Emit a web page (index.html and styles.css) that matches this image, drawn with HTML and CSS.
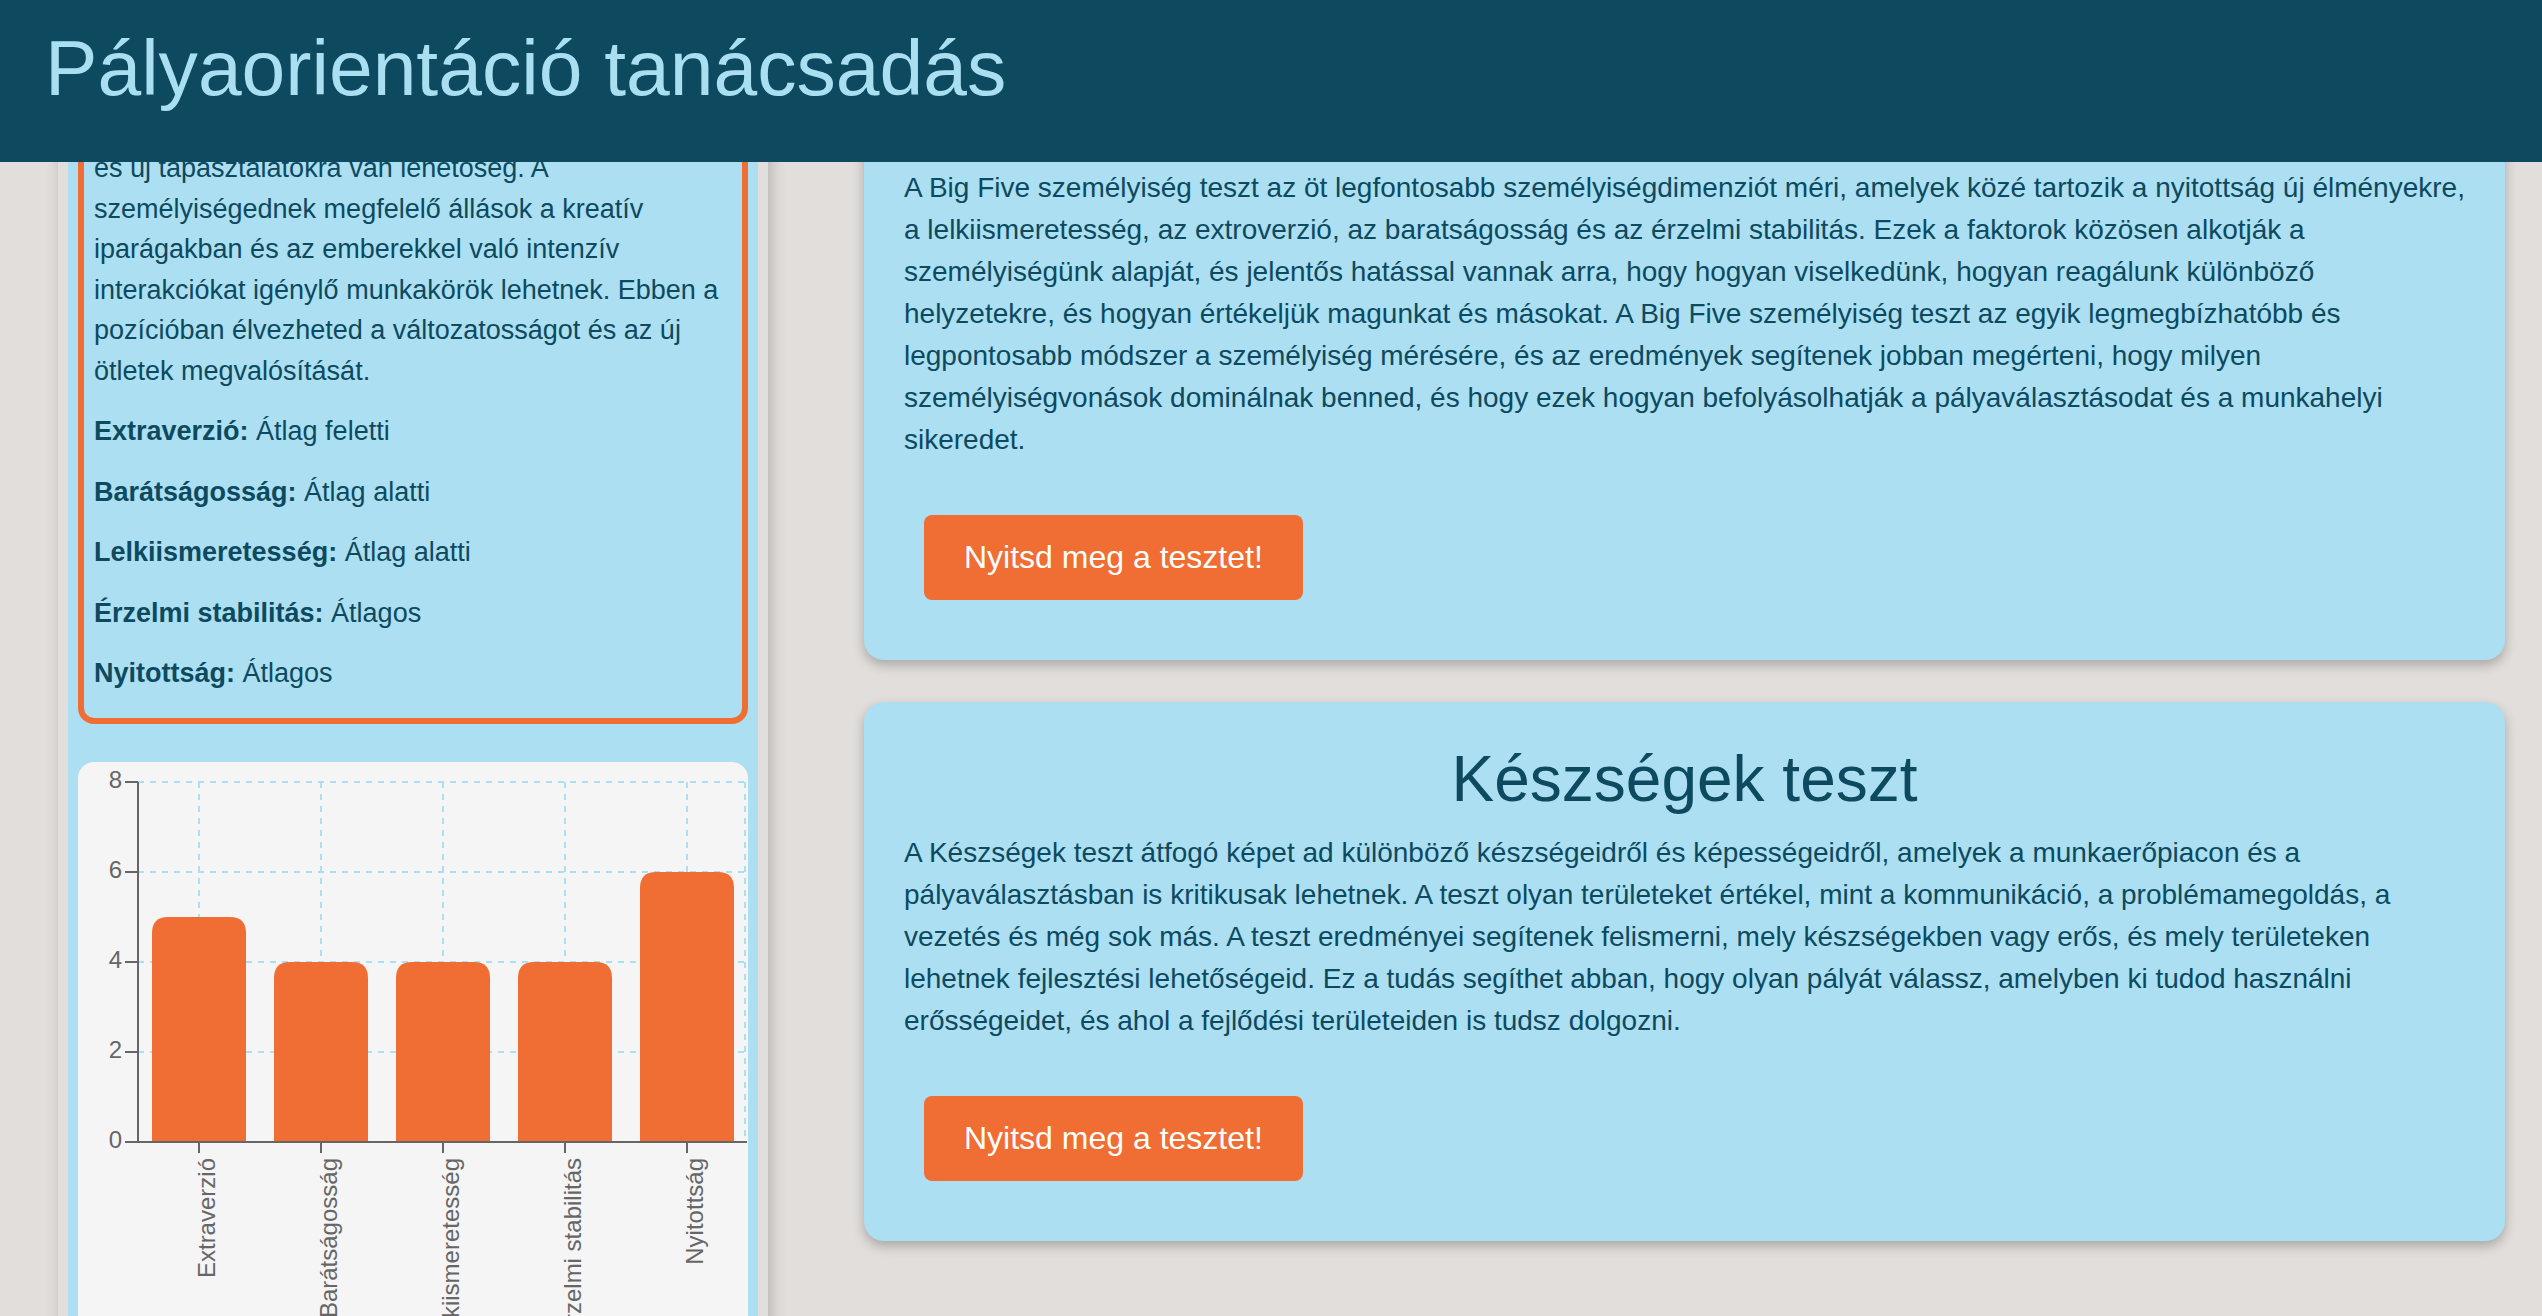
FILE: index.html
```html
<!DOCTYPE html>
<html lang="hu">
<head>
<meta charset="utf-8">
<title>Pályaorientáció tanácsadás</title>
<link rel="stylesheet" href="styles.css">
</head>
<body>
<header class="topbar">
  <h1 class="topbar-title">Pályaorientáció tanácsadás</h1>
</header>

<div class="layout">
  <aside class="sidebar">
    <div class="sidebar-panel">
      <div class="result-box">
        <p class="result-text">és új tapasztalatokra van lehetőség. A személyiségednek megfelelő állások a kreatív iparágakban és az emberekkel való intenzív interakciókat igénylő munkakörök lehetnek. Ebben a pozícióban élvezheted a változatosságot és az új ötletek megvalósítását.</p>
        <p class="result-text"><strong>Extraverzió:</strong> Átlag feletti</p>
        <p class="result-text"><strong>Barátságosság:</strong> Átlag alatti</p>
        <p class="result-text"><strong>Lelkiismeretesség:</strong> Átlag alatti</p>
        <p class="result-text"><strong>Érzelmi stabilitás:</strong> Átlagos</p>
        <p class="result-text"><strong>Nyitottság:</strong> Átlagos</p>
      </div>
      <div class="chart-card">
        <svg class="chart" width="669" height="640" viewBox="0 0 669 640">
          <g class="grid">
            <line x1="60" y1="20" x2="669" y2="20"/>
            <line x1="60" y1="110" x2="669" y2="110"/>
            <line x1="60" y1="200" x2="669" y2="200"/>
            <line x1="60" y1="290" x2="669" y2="290"/>
            <line x1="121" y1="20" x2="121" y2="380"/>
            <line x1="243" y1="20" x2="243" y2="380"/>
            <line x1="365" y1="20" x2="365" y2="380"/>
            <line x1="487" y1="20" x2="487" y2="380"/>
            <line x1="609" y1="20" x2="609" y2="380"/>
            <line x1="667" y1="20" x2="667" y2="380"/>
          </g>
          <g class="bars">
            <path d="M74 380 V171 Q74 155 90 155 H152 Q168 155 168 171 V380 Z"/>
            <path d="M196 380 V216 Q196 200 212 200 H274 Q290 200 290 216 V380 Z"/>
            <path d="M318 380 V216 Q318 200 334 200 H396 Q412 200 412 216 V380 Z"/>
            <path d="M440 380 V216 Q440 200 456 200 H518 Q534 200 534 216 V380 Z"/>
            <path d="M562 380 V126 Q562 110 578 110 H640 Q656 110 656 126 V380 Z"/>
          </g>
          <g class="axis">
            <line x1="60" y1="20" x2="60" y2="381"/>
            <line x1="47" y1="380" x2="669" y2="380"/>
            <line x1="47" y1="20" x2="60" y2="20"/>
            <line x1="47" y1="110" x2="60" y2="110"/>
            <line x1="47" y1="200" x2="60" y2="200"/>
            <line x1="47" y1="290" x2="60" y2="290"/>
            <line x1="121" y1="380" x2="121" y2="391"/>
            <line x1="243" y1="380" x2="243" y2="391"/>
            <line x1="365" y1="380" x2="365" y2="391"/>
            <line x1="487" y1="380" x2="487" y2="391"/>
            <line x1="609" y1="380" x2="609" y2="391"/>
          </g>
          <g class="ylabels">
            <text x="44" y="20">8</text>
            <text x="44" y="110">6</text>
            <text x="44" y="200">4</text>
            <text x="44" y="290">2</text>
            <text x="44" y="380">0</text>
          </g>
          <g class="xlabels">
            <text transform="translate(131 396) rotate(-90)">Extraverzió</text>
            <text transform="translate(253 396) rotate(-90)">Barátságosság</text>
            <text transform="translate(375 396) rotate(-90)">Lelkiismeretesség</text>
            <text transform="translate(497 396) rotate(-90)">Érzelmi stabilitás</text>
            <text transform="translate(619 396) rotate(-90)">Nyitottság</text>
          </g>
        </svg>
      </div>
    </div>
  </aside>

  <main class="content">
    <section class="test-card">
      <p class="test-text">A Big Five személyiség teszt az öt legfontosabb személyiségdimenziót méri, amelyek közé tartozik a nyitottság új élményekre, a lelkiismeretesség, az extroverzió, az baratságosság és az érzelmi stabilitás. Ezek a faktorok közösen alkotják a személyiségünk alapját, és jelentős hatással vannak arra, hogy hogyan viselkedünk, hogyan reagálunk különböző helyzetekre, és hogyan értékeljük magunkat és másokat. A Big Five személyiség teszt az egyik legmegbízhatóbb és legpontosabb módszer a személyiség mérésére, és az eredmények segítenek jobban megérteni, hogy milyen személyiségvonások dominálnak benned, és hogy ezek hogyan befolyásolhatják a pályaválasztásodat és a munkahelyi sikeredet.</p>
      <button class="test-button" type="button">Nyitsd meg a tesztet!</button>
    </section>

    <section class="test-card">
      <h2 class="test-title">Készségek teszt</h2>
      <p class="test-text">A Készségek teszt átfogó képet ad különböző készségeidről és képességeidről, amelyek a munkaerőpiacon és a pályaválasztásban is kritikusak lehetnek. A teszt olyan területeket értékel, mint a kommunikáció, a problémamegoldás, a vezetés és még sok más. A teszt eredményei segítenek felismerni, mely készségekben vagy erős, és mely területeken lehetnek fejlesztési lehetőségeid. Ez a tudás segíthet abban, hogy olyan pályát válassz, amelyben ki tudod használni erősségeidet, és ahol a fejlődési területeiden is tudsz dolgozni.</p>
      <button class="test-button" type="button">Nyitsd meg a tesztet!</button>
    </section>
  </main>
</div>
</body>
</html>
```

FILE: styles.css
```css
html, body {
  margin: 0;
  height: 100%;
  overflow: hidden;
}

body {
  background: #e2dedb;
  font-family: "Liberation Sans", Arial, sans-serif;
  font-size: 27px;
  color: #0d4a5f;
}

.topbar {
  position: fixed;
  top: 0;
  left: 0;
  right: 0;
  height: 162px;
  background: #0d4a5f;
  z-index: 10;
}

.topbar-title {
  margin: 0;
  padding: 22px 0 0 45px;
  font-size: 78.6px;
  font-weight: normal;
  line-height: 92px;
  color: #aadff2;
}

.layout {
  display: flex;
  align-items: flex-start;
  gap: 96px;
  padding: 102px 37px 0 58px;
}

.sidebar {
  width: 710px;
  flex: none;
  box-sizing: border-box;
  padding: 10px;
  background: #e2dedb;
  box-shadow: 3px 0 14px rgba(0, 0, 0, 0.2);
}

.sidebar-panel {
  background: #abdff1;
  padding: 10px 10px 0;
}

.result-box {
  border: 6px solid #f06e33;
  border-radius: 16px;
  padding: 0 10px 4px;
}

.result-text {
  margin: 20px 0;
  font-size: 27px;
  line-height: 40.5px;
}

.result-text strong {
  font-weight: bold;
}

.chart-card {
  margin-top: 38px;
  background: #f5f5f5;
  border-radius: 16px;
  height: 640px;
  overflow: hidden;
}

.chart {
  display: block;
  font-family: "Liberation Sans", Arial, sans-serif;
}

.grid line {
  stroke: #abdff1;
  stroke-width: 2;
  stroke-dasharray: 6 6;
}

.bars path {
  fill: #f06e33;
}

.axis line {
  stroke: #666666;
  stroke-width: 2;
}

.ylabels text {
  font-size: 24px;
  fill: #666666;
  text-anchor: end;
  dominant-baseline: middle;
}

.xlabels text {
  font-size: 24px;
  fill: #666666;
  text-anchor: end;
  dominant-baseline: middle;
}

.content {
  flex: 1;
  min-width: 0;
  padding-top: 25px;
  display: flex;
  flex-direction: column;
  gap: 42px;
}

.test-card {
  background: #abdff1;
  border-radius: 20px;
  padding: 40px;
  box-shadow: 0 5px 12px rgba(0, 0, 0, 0.25);
}

.test-title {
  margin: 0 0 16px;
  text-align: center;
  font-size: 64px;
  font-weight: normal;
  line-height: 74px;
  color: #0d4a5f;
}

.test-text {
  margin: 0 0 34px;
  font-size: 28px;
  line-height: 42px;
}

.test-button {
  display: inline-block;
  margin: 20px;
  padding: 24px 40px;
  border: none;
  border-radius: 8px;
  background: #f06e33;
  color: #ffffff;
  font-family: "Liberation Sans", Arial, sans-serif;
  font-size: 32px;
  line-height: 37px;
  cursor: pointer;
}
```
